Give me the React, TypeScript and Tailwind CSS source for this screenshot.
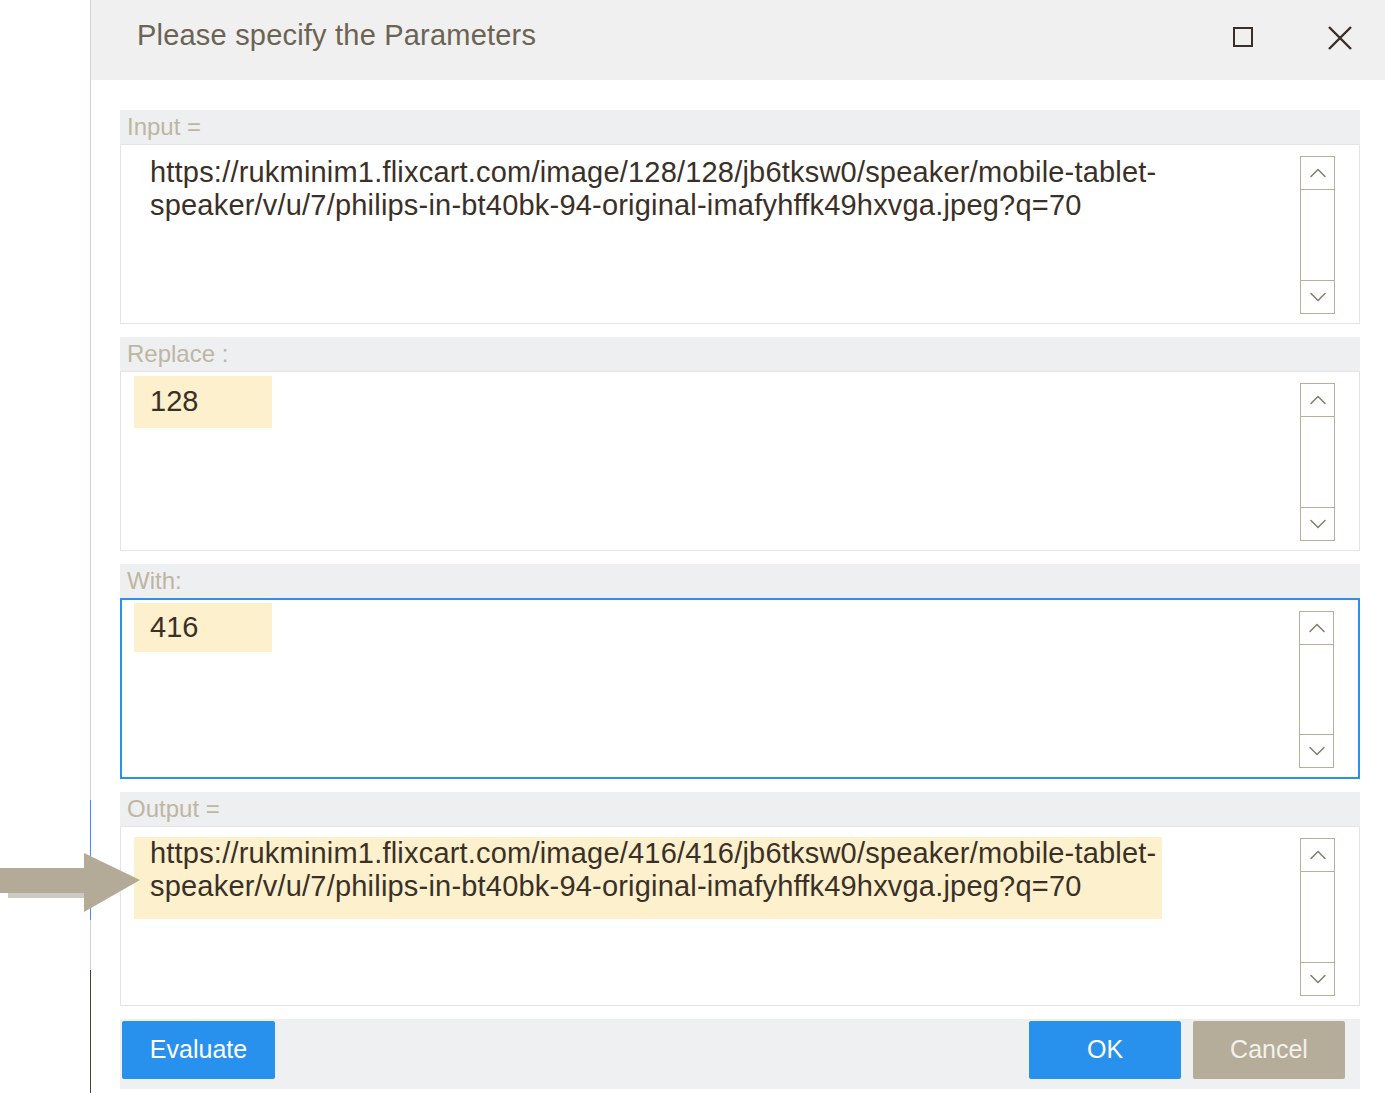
import { ChevronUp, ChevronDown } from "lucide-react";

const font = { fontFamily: '"Liberation Sans", Arial, sans-serif' };

const Scroll = () => (
  <div className="absolute right-[24px] top-[11px] bottom-[9px] w-[35px] border border-[#b8af9b] flex flex-col bg-white">
    <div className="h-[33px] border-b border-[#b8af9b] flex items-center justify-center">
      <ChevronUp size={28} strokeWidth={1.3} className="text-[#857d6b]" />
    </div>
    <div className="flex-1" />
    <div className="h-[33px] border-t border-[#b8af9b] flex items-center justify-center">
      <ChevronDown size={28} strokeWidth={1.3} className="text-[#857d6b]" />
    </div>
  </div>
);

const Field = ({
  label,
  active,
  children,
}: {
  label: string;
  active?: boolean;
  children: React.ReactNode;
}) => (
  <div className="mb-[13px]">
    <div className="h-[34px] bg-[#eeeff1] flex items-center pl-[7px] text-[24px] text-[#bdb6a2]">
      {label}
    </div>
    <div
      className={
        active
          ? "relative h-[181px] border-2 border-[#2b8fec] bg-white"
          : "relative h-[180px] border border-[#e4e4e4] bg-white"
      }
    >
      {children}
      <Scroll />
    </div>
  </div>
);

const url1 = "https://rukminim1.flixcart.com/image/128/128/jb6tksw0/speaker/mobile-tablet-";
const url2 = "speaker/v/u/7/philips-in-bt40bk-94-original-imafyhffk49hxvga.jpeg?q=70";

export default function App() {
  return (
    <div className="relative w-[1385px] h-[1093px] flex bg-white overflow-hidden" style={font}>
      <div className="w-[90px] shrink-0 bg-white" />
      <div className="relative flex-1 flex flex-col border-l border-[#d6d2ca]">
        <div className="absolute -left-px top-[970px] bottom-0 w-px bg-[#4a3c30]" />
        <div className="absolute -left-px top-[800px] h-[120px] w-px bg-[#3c95ec]" />
        <header className="h-[80px] bg-[#f0f0f1] flex items-center pl-[46px] pr-[33px]">
          <h1 className="text-[29px] tracking-[0.2px] text-[#6b6453] -mt-[8px] flex-1">
            Please specify the Parameters
          </h1>
          <div className="w-[20px] h-[20px] border-2 border-[#3a2e26] mr-[75px] -mt-[6px]" />
          <svg width="24" height="24" viewBox="0 0 24 24" className="-mt-[5px]">
            <path d="M1 1L23 23M23 1L1 23" stroke="#3a2e26" strokeWidth="2.4" />
          </svg>
        </header>
        <main className="pl-[29px] pr-[25px] pt-[30px] text-[#3a3028]">
          <Field label="Input =">
            <div className="pl-[29px] pt-[11px] text-[29px] leading-[33px] tracking-[0.2px]">
              {url1}
              <br />
              {url2}
            </div>
          </Field>
          <Field label="Replace :">
            <div className="ml-[13px] mt-[4px] w-[138px] h-[52px] bg-[#fdf0cc] pl-[16px] flex items-center text-[29px]">
              128
            </div>
          </Field>
          <Field label="With:" active>
            <div className="ml-[12px] mt-[3px] w-[138px] h-[49px] bg-[#fdf0cc] pl-[16px] flex items-center text-[29px]">
              416
            </div>
          </Field>
          <Field label="Output =">
            <div className="ml-[13px] mt-[10px] w-[1028px] h-[82px] bg-[#fdf0cc] pl-[16px] text-[29px] leading-[33px] tracking-[0.2px]">
              {url1.replace(/128/g, "416")}
              <br />
              {url2}
            </div>
          </Field>
          <div className="h-[70px] bg-[#eff0f2] flex items-start pt-[2px] px-[2px]">
            <button className="w-[153px] h-[58px] bg-[#2891ee] text-white text-[25px] rounded-[2px]">
              Evaluate
            </button>
            <div className="flex-1" />
            <button className="w-[152px] h-[58px] bg-[#2891ee] text-white text-[25px] rounded-[2px]">
              OK
            </button>
            <button className="w-[152px] h-[58px] ml-[12px] mr-[13px] bg-[#b5ad9a] text-[#f4f1ea] text-[25px] rounded-[2px]">
              Cancel
            </button>
          </div>
        </main>
      </div>
      <svg className="absolute left-0 top-[850px]" width="145" height="66" viewBox="0 0 145 66">
        <rect x="8" y="40" width="78" height="8" fill="#8f8878" opacity="0.45" />
        <rect x="0" y="18" width="88" height="25" fill="#b3ab97" />
        <polygon points="84,3 140,30 84,62" fill="#b3ab97" />
      </svg>
    </div>
  );
}
